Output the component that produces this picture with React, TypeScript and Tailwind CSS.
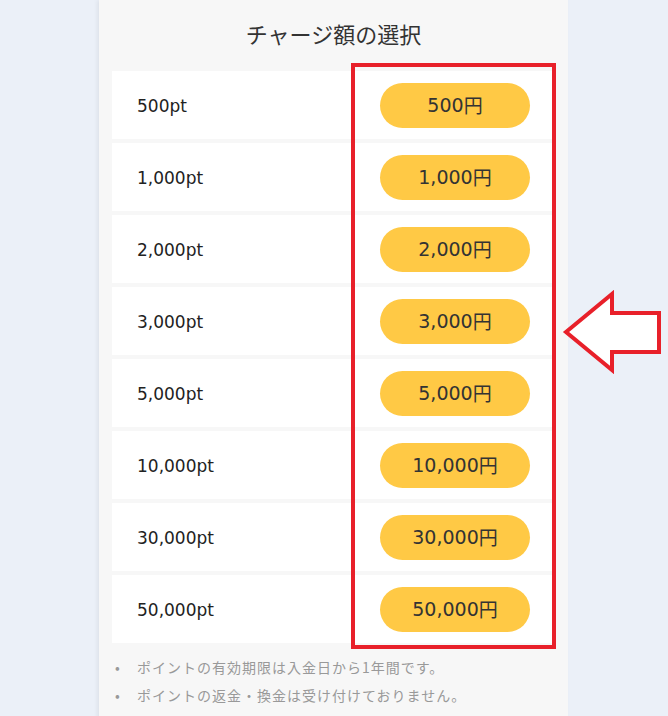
import React from 'react';

const plans = [
  { pt: '500pt', yen: '500' },
  { pt: '1,000pt', yen: '1,000' },
  { pt: '2,000pt', yen: '2,000' },
  { pt: '3,000pt', yen: '3,000' },
  { pt: '5,000pt', yen: '5,000' },
  { pt: '10,000pt', yen: '10,000' },
  { pt: '30,000pt', yen: '30,000' },
  { pt: '50,000pt', yen: '50,000' },
];

const notes = ['ポイントの有効期限は入金日から1年間です。', 'ポイントの返金・換金は受け付けておりません。'];

const latin = { fontFamily: '"DejaVu Sans", "Noto Sans CJK JP", sans-serif' };

const App: React.FC = () => {
  return (
    <div
      className="relative min-h-[716px] w-full overflow-hidden bg-[#ebf0f8]"
      style={{ fontFamily: '"Noto Sans CJK JP", "Noto Sans", sans-serif' }}
    >
      <div className="relative ml-[99px] w-[469px] bg-[#f7f7f7] px-[13px] pb-6 shadow-[-2px_0_4px_rgba(0,0,0,0.06)]">
        <h2 className="flex h-[71px] items-center justify-center pb-1 text-[22px] text-[#333]">チャージ額の選択</h2>

        <div className="flex flex-col gap-1">
          {plans.map((p) => (
            <div key={p.pt} className="flex h-[68px] items-center justify-between bg-white pl-[25px] pr-[25px]">
              <span className="translate-y-[2px] text-[17px] text-[#222]" style={latin}>
                {p.pt}
              </span>
              <button className="flex h-[45px] w-[150px] items-center justify-center rounded-full bg-[#ffc945] text-[19px] text-[#333]">
                <span style={latin}>{p.yen}</span>
                <span className="text-[19px]">円</span>
              </button>
            </div>
          ))}
        </div>

        <ul className="mt-[14px] flex flex-col gap-[8px]">
          {notes.map((n) => (
            <li key={n} className="flex h-[20px] items-center text-[14px] tracking-[1px] text-[#999]">
              <span className="w-[25px] pl-[3px]">•</span>
              {n}
            </li>
          ))}
        </ul>

        <div className="pointer-events-none absolute left-[252px] top-[63px] h-[586px] w-[205px] border-4 border-[#e8202a]" />
      </div>

      <svg className="absolute left-[562px] top-[290px]" width="100" height="84" viewBox="0 0 100 84">
        <polygon
          points="4,42 50,4 50,23 97,23 97,62 50,62 50,80"
          fill="#ffffff"
          stroke="#e8202a"
          strokeWidth="4"
          strokeLinejoin="miter"
        />
      </svg>
    </div>
  );
};

export default App;
